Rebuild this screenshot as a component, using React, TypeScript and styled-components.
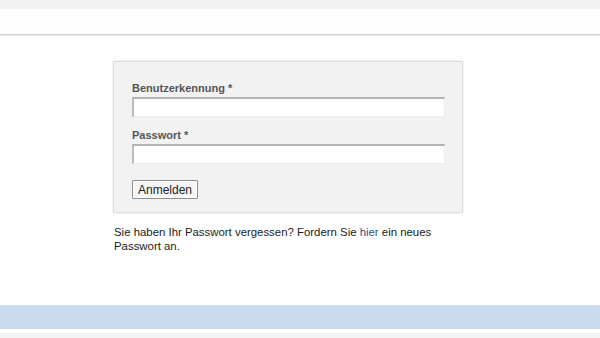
import styled, { createGlobalStyle } from 'styled-components';

const GlobalStyle = createGlobalStyle`
  html, body {
    margin: 0;
    padding: 0;
    background: #ffffff;
  }
  body {
    font-family: 'Liberation Sans', Arial, sans-serif;
  }
`;

const Page = styled.div`
  width: 600px;
  height: 338px;
  overflow: hidden;
  display: flex;
  flex-direction: column;
  background: #ffffff;
`;

const TopStrip = styled.div`
  height: 9px;
  background: #f3f3f3;
`;

const Header = styled.header`
  height: 25px;
  background: #fdfdfd;
  border-bottom: 1px solid #cfcfcf;
  box-shadow: 0 1px 0 #ececec;
`;

const Main = styled.main`
  flex: 1;
  padding: 26px 0 0 113px;
`;

const LoginPanel = styled.form`
  box-sizing: border-box;
  width: 350px;
  padding: 19px 18px 13px 18px;
  background: #f2f2f2;
  border: 1px solid #dcdcdc;
  box-shadow: 0 0 2px rgba(0, 0, 0, 0.12);
  display: flex;
  flex-direction: column;
`;

const Field = styled.div`
  display: flex;
  flex-direction: column;
  margin-bottom: 11px;
`;

const Label = styled.label`
  font-family: 'Liberation Sans', Arial, sans-serif;
  font-size: 11px;
  font-weight: 700;
  color: #555555;
  line-height: 14px;
  margin-bottom: 2px;
`;

const TextInput = styled.input`
  box-sizing: border-box;
  width: 313px;
  height: 20px;
  margin: 0;
  background: #ffffff;
  border: 1px solid #ececec;
  border-top: 2px solid #b4b4b4;
  border-left: 2px solid #bcbcbc;
  outline: none;
`;

const SubmitButton = styled.button`
  align-self: flex-start;
  box-sizing: border-box;
  height: 19px;
  margin-top: 5px;
  padding: 0 5px;
  font-family: 'Liberation Sans', Arial, sans-serif;
  font-size: 12px;
  color: #222222;
  background: #f5f5f5;
  border: 1px solid #8c8c8c;
  border-radius: 1px;
  box-shadow: inset 0 0 0 1px #ffffff;
`;

const Hint = styled.p`
  width: 330px;
  margin: 12px 0 0 1px;
  font-family: 'Liberation Sans', Arial, sans-serif;
  font-size: 11.4px;
  line-height: 14px;
  color: #1a1a1a;
`;

const HintLink = styled.a`
  color: #2b4f8c;
  text-decoration: none;
`;

const Footer = styled.footer`
  height: 23px;
  background: #ccdcee;
  border-top: 1px solid #d6dee4;
  margin-bottom: 4px;
`;

const BottomStrip = styled.div`
  height: 5px;
  background: #f4f4f4;
`;

export default function App() {
  return (
    <>
      <GlobalStyle />
      <Page>
        <TopStrip />
        <Header />
        <Main>
          <LoginPanel onSubmit={(e) => e.preventDefault()}>
            <Field>
              <Label htmlFor="user">Benutzerkennung *</Label>
              <TextInput id="user" type="text" />
            </Field>
            <Field>
              <Label htmlFor="pass">Passwort *</Label>
              <TextInput id="pass" type="password" />
            </Field>
            <SubmitButton type="submit">Anmelden</SubmitButton>
          </LoginPanel>
          <Hint>
            Sie haben Ihr Passwort vergessen? Fordern Sie <HintLink href="#">hier</HintLink> ein neues
            Passwort an.
          </Hint>
        </Main>
        <Footer />
        <BottomStrip />
      </Page>
    </>
  );
}
